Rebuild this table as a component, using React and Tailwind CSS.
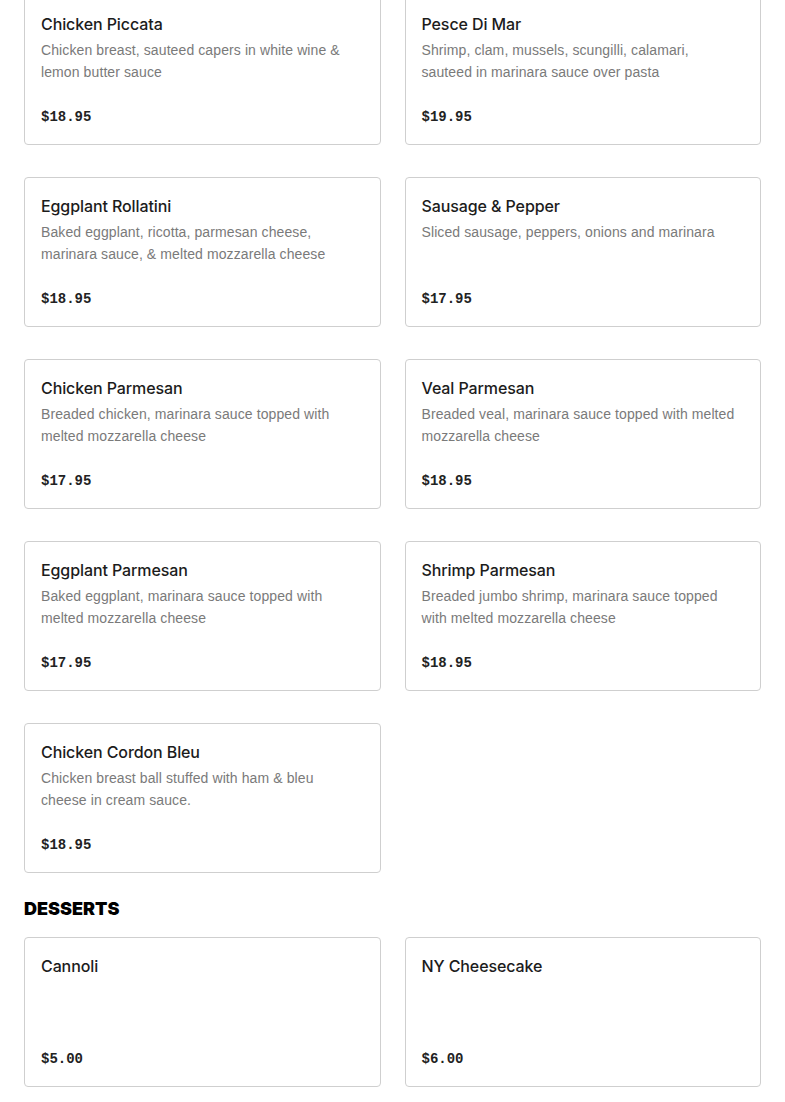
import React from 'react';

const entrees = [
  { name: 'Chicken Piccata', desc: 'Chicken breast, sauteed capers in white wine & lemon butter sauce', price: '$18.95' },
  { name: 'Pesce Di Mar', desc: 'Shrimp, clam, mussels, scungilli, calamari, sauteed in marinara sauce over pasta', price: '$19.95' },
  { name: 'Eggplant Rollatini', desc: 'Baked eggplant, ricotta, parmesan cheese, marinara sauce, & melted mozzarella cheese', price: '$18.95' },
  { name: 'Sausage & Pepper', desc: 'Sliced sausage, peppers, onions and marinara', price: '$17.95' },
  { name: 'Chicken Parmesan', desc: 'Breaded chicken, marinara sauce topped with melted mozzarella cheese', price: '$17.95' },
  { name: 'Veal Parmesan', desc: 'Breaded veal, marinara sauce topped with melted mozzarella cheese', price: '$18.95' },
  { name: 'Eggplant Parmesan', desc: 'Baked eggplant, marinara sauce topped with melted mozzarella cheese', price: '$17.95' },
  { name: 'Shrimp Parmesan', desc: 'Breaded jumbo shrimp, marinara sauce topped with melted mozzarella cheese', price: '$18.95' },
  { name: 'Chicken Cordon Bleu', desc: 'Chicken breast ball stuffed with ham & bleu cheese in cream sauce.', price: '$18.95' },
];

const desserts = [
  { name: 'Cannoli', desc: '', price: '$5.00' },
  { name: 'NY Cheesecake', desc: '', price: '$6.00' },
];

const MenuCard = ({ item }) => (
  <div className="flex flex-col h-[150px] border border-[#cfcfcf] rounded-[4px] bg-white px-4 pt-[16px] pb-[17px]">
    <h3 className="text-[16px] leading-6 font-medium text-[#1c1c1c] font-['Inter',sans-serif] tracking-[-0.1px]">{item.name}</h3>
    {item.desc && (
      <p className="mt-[3px] text-[14px] leading-[22px] text-[#7a7a7a] pr-2 tracking-[0.1px]">{item.desc}</p>
    )}
    <div className="mt-auto text-[14px] leading-5 font-bold text-[#222] font-['Liberation_Mono',monospace]">
      {item.price}
    </div>
  </div>
);

export default function App() {
  return (
    <div className="min-h-screen bg-white px-6 font-['Liberation_Sans',Arial,sans-serif] overflow-hidden">
      <div className="-mt-[5px] grid grid-cols-2 gap-x-6 gap-y-8">
        {entrees.map((item) => (
          <MenuCard key={item.name} item={item} />
        ))}
      </div>
      <h2 className="mt-[24px] mb-[16px] text-[18px] leading-6 font-black uppercase text-black font-['Inter',sans-serif]">Desserts</h2>
      <div className="grid grid-cols-2 gap-x-6 gap-y-8">
        {desserts.map((item) => (
          <MenuCard key={item.name} item={item} />
        ))}
      </div>
    </div>
  );
}
